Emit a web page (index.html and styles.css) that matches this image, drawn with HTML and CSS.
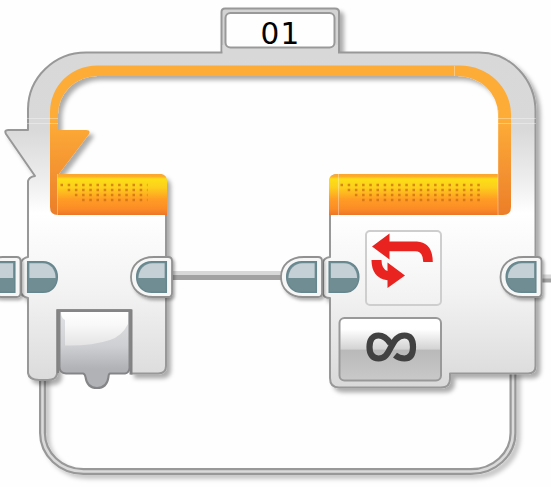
FILE: index.html
```
<!DOCTYPE html>
<html lang="en">
<head>
<meta charset="utf-8">
<title>Loop block</title>
<link rel="stylesheet" href="styles.css">
</head>
<body>
<svg class="canvas" viewBox="0 0 551 487" width="551" height="487" role="img" aria-label="Loop block 01">
  <defs>
    <linearGradient id="body" gradientUnits="userSpaceOnUse" x1="0" y1="52" x2="0" y2="388">
      <stop offset="0" stop-color="#d8d8d8"/><stop offset=".23" stop-color="#d9d9d9"/>
      <stop offset=".37" stop-color="#ececec"/><stop offset=".48" stop-color="#fff"/>
      <stop offset=".72" stop-color="#f2f2f2"/><stop offset="1" stop-color="#d9d9d9"/>
    </linearGradient>
    <linearGradient id="rail" gradientUnits="userSpaceOnUse" x1="0" y1="120" x2="0" y2="215">
      <stop offset="0" stop-color="#fdac38"/><stop offset="1" stop-color="#ec7e2a"/>
    </linearGradient>
    <linearGradient id="header" x1="0" y1="0" x2="0" y2="1">
      <stop offset="0" stop-color="#fca52f"/><stop offset=".06" stop-color="#fcae28"/><stop offset=".12" stop-color="#fbdf15"/>
      <stop offset=".32" stop-color="#fdd01c"/><stop offset=".62" stop-color="#ff9c25"/><stop offset=".85" stop-color="#fc8c26"/><stop offset="1" stop-color="#ec7628"/>
    </linearGradient>
    <linearGradient id="drop" x1="0" y1="0" x2="0" y2="1">
      <stop offset="0" stop-color="#e2e3e5"/><stop offset=".45" stop-color="#cfd0d3"/><stop offset=".75" stop-color="#b0b2b6"/><stop offset="1" stop-color="#b0b2b6"/>
    </linearGradient>
    <linearGradient id="gloss" x1="0" y1="0" x2="0" y2="1">
      <stop offset="0" stop-color="#fff"/><stop offset=".4" stop-color="#f8f8f8"/><stop offset="1" stop-color="#e4e4e6"/>
    </linearGradient>
    <linearGradient id="button" x1="0" y1="0" x2="0" y2="1">
      <stop offset="0" stop-color="#fff"/><stop offset=".18" stop-color="#fff"/><stop offset=".5" stop-color="#d3d3d3"/>
      <stop offset=".51" stop-color="#b9b9b9"/><stop offset="1" stop-color="#c9c9c9"/>
    </linearGradient>
    <linearGradient id="tile" x1="0" y1="0" x2="0" y2="1">
      <stop offset="0" stop-color="#fff"/><stop offset="1" stop-color="#f1f1f1"/>
    </linearGradient>
    <filter id="shadow" x="-20%" y="-20%" width="150%" height="150%">
      <feDropShadow dx="4" dy="4" stdDeviation="2.3" flood-color="#000" flood-opacity=".32"/>
    </filter>
    <filter id="wire-shadow" x="-20%" y="-20%" width="150%" height="150%">
      <feDropShadow dx="4" dy="4" stdDeviation="2.3" flood-color="#000" flood-opacity=".22"/>
    </filter>
    <filter id="soft" x="-20%" y="-20%" width="150%" height="150%">
      <feDropShadow dx="2" dy="2.500" stdDeviation="1.6" flood-color="#000" flood-opacity=".3"/>
    </filter>
    <clipPath id="teal-top"><rect x="-2" y="1.5" width="36" height="15.5"/></clipPath>
    <g id="socket">
      <path class="teal" d="M.7 .7H16C25 .7 30.3 8 30.3 16S25 31.3 16 31.3H.7z"/>
      <path class="teal-light" clip-path="url(#teal-top)" d="M2.4 2.2H15.5C23.5 2.2 28.3 8.5 28.5 16V31H2.4z"/>
    </g>
    <g id="plug">
      <path class="plug-case" filter="url(#soft)" d="M18-4H32Q36-4 36 0V32Q36 36 32 36H17C4 36-5 28-5 16S4-4 18-4z"/>
      <path class="teal" d="M30.3 .7H16C6 .7 .7 8 .7 16S6 31.3 16 31.3H30.3z"/>
      <path class="teal-light" clip-path="url(#teal-top)" d="M28.6 2.2H16.5C8 2.2 2.8 9 2.5 16V31H28.6z"/>
    </g>
  </defs>

  <!-- return wire -->
  <g filter="url(#wire-shadow)">
    <path class="wire-edge" d="M42.500 374V433A41 38.500 0 0 0 83.500 471.500H471A42 38.500 0 0 0 513 433V370"/>
    <path class="wire-core" d="M42.500 374V433A41 38.500 0 0 0 83.500 471.500H471A42 38.500 0 0 0 513 433V370"/>
  </g>

  <!-- name tab -->
  <path class="tab" filter="url(#shadow)" d="M221.500 54V12Q221.500 8.500 225 8.500H335Q339 8.500 339 12V54z"/>

  <!-- frame with start and end blocks, and the orange rail along its inside -->
  <g filter="url(#shadow)">
    <path class="body" d="M28 130V109A58 57 0 0 1 86 52.500H479A56.500 59 0 0 1 535.500 112V366Q535.500 373.500 528 373.500H450V379Q450 387.500 441 387.500H339Q330 387.500 330 378V298Q324 298 323 294V262Q324 258 330 257V183Q330 175 338 175H501V112A42 40 0 0 0 459 72H97A43 40 0 0 0 54 114V175H158Q166 175 166 183V366Q166 373.500 158 373.500H131V310H57V374Q56 380 48 380H39Q29 380 28 373V298Q23 297 21 293V262Q23 258 28 257V181Q29 177 35 176L6 134Q4 130 8 130z"/>
    <path class="rail" d="M50 207V112A47 46.500 0 0 1 97 65.500H460A51 49 0 0 1 511 114V207Q511 215 503 215H498V114A40 38 0 0 0 458 76H97A39 38 0 0 0 58 114V130H86Q91 130 89 134L58 175V215Q50 215 50 207z"/>
  </g>
  <path class="tab-join" d="M222.500 45H338V58H222.500z"/>
  <rect class="tab-field" x="225.500" y="13" width="109" height="34.500" rx="5"/>
  <text class="tab-label" x="260.500" y="44">01</text>

  <!-- headers -->
  <path class="header" d="M57.500 174H161Q167 175 167 181V215H57.500z"/>
  <path class="header" d="M329 215V181Q329 174 337 174H498V215z"/>
  <g class="dots">
    <path d="M60.500 185H147.500M67.700 190H147.500M74.900 195H147.500M82.100 200H147.500"/>
    <path d="M340.500 185H483M347.700 190H483M354.900 195H483M362.100 200H483"/>
  </g>
  <path class="seam" d="M57.500 174V215M338.500 174V215M498 110V215M27 118.500H58M27 123.500H58M498 118.500H536M498 123.500H536M454.500 66V76"/>

  <!-- empty drop slot -->
  <path class="slot-edge" d="M57 309.500H132.500V374.500H129.500V311H59V373H57z"/>
  <path class="slot" d="M59.500 311H129.500V368Q129 373 125 373.500H110Q108.500 374 108.500 377Q107 388 97 388T85.500 377Q85 374 83 373.500H66Q59.500 373 59.500 367z"/>
  <path class="gloss" d="M61 312H128V324Q122 336 110 340Q92 346 65 345.500V320Q61 318 61 312z"/>

  <!-- connector between blocks -->
  <path class="link" d="M170 277.500H284M539 280H551"/>
  <path class="link-top" d="M172 273H284M539 276.500H551"/>
  <use href="#socket" x="27" y="261"/>
  <use href="#plug" x="-15.500" y="261"/>
  <use href="#plug" x="136" y="261"/>
  <use href="#plug" x="286" y="261"/>
  <use href="#socket" x="328.500" y="261"/>
  <use href="#plug" x="505.500" y="261"/>

  <!-- loop icon -->
  <rect class="tile" x="366" y="231" width="75" height="74" rx="4"/>
  <path class="arrow" d="M372 246.500 389.500 233.500V241.500H417Q432.500 242.500 432.800 262H423.300Q423 251.300 415.500 251.300H389.500V259.500zM371.500 260H381.500Q381.500 269 387.500 271V262.500L405 275.500 387.500 288V280.300Q371.500 278 371.500 260z"/>

  <!-- infinity button -->
  <rect class="button" x="339.500" y="318" width="101.500" height="62.500" rx="5"/>
  <path class="infinity" d="M395 355.200Q399 358.500 404.500 358.500C410.500 358.500 413 354 413 347S410.500 335.500 404.500 335.500C397 335.500 394 341.500 391 347S386 358.500 378.500 358.500C372.500 358.500 369.500 354 369.500 347S372.500 335.500 378.500 335.500C384 335.500 387.500 339 390.500 343.500"/>
</svg>
</body>
</html>
```
FILE: styles.css
```
body {
  margin: 0;
  background: #fefefe;
  overflow: hidden;
}
.canvas { display: block; }

.wire-edge { fill: none; stroke: #989898; stroke-width: 7; }
.wire-core { fill: none; stroke: #dadada; stroke-width: 2.6; }

.tab { fill: #d3d3d3; stroke: #989898; stroke-width: 2; }
.tab-join { fill: #d8d8d8; }
.tab-field { fill: #fefefe; stroke: #999; stroke-width: 2; }
.tab-label {
  font-family: "DejaVu Sans", Verdana, sans-serif;
  font-size: 29.5px;
  letter-spacing: 1.3px;
  fill: #000;
}

.body { fill: url(#body); stroke: #989898; stroke-width: 2; stroke-linejoin: round; }
.rail { fill: url(#rail); }
.header { fill: url(#header); }
.dots { fill: none; stroke: #c96b12; stroke-opacity: .72; stroke-width: 2.5; stroke-dasharray: 2.5 4.7; }
.seam { fill: none; stroke: #fff; stroke-opacity: .35; stroke-width: 1; }

.slot-edge { fill: #828282; }
.slot { fill: url(#drop); stroke: #858588; stroke-width: 2; }
.gloss { fill: url(#gloss); }

.link { fill: none; stroke: #a2a2a2; stroke-width: 5; }
.link-top { fill: none; stroke: #d8d8d8; stroke-width: 4; }
.plug-case { fill: #f6f6f6; stroke: #919191; stroke-width: 1.8; }
.teal { fill: #708d94; stroke: #66868e; stroke-width: 1.5; }
.teal-light { fill: #c4d0d5; }

.tile { fill: url(#tile); stroke: #cecece; stroke-width: 2; }
.arrow { fill: #e92420; }
.button { fill: url(#button); stroke: #999; stroke-width: 2; }
.infinity { fill: none; stroke: #414141; stroke-width: 6.2; }
```
